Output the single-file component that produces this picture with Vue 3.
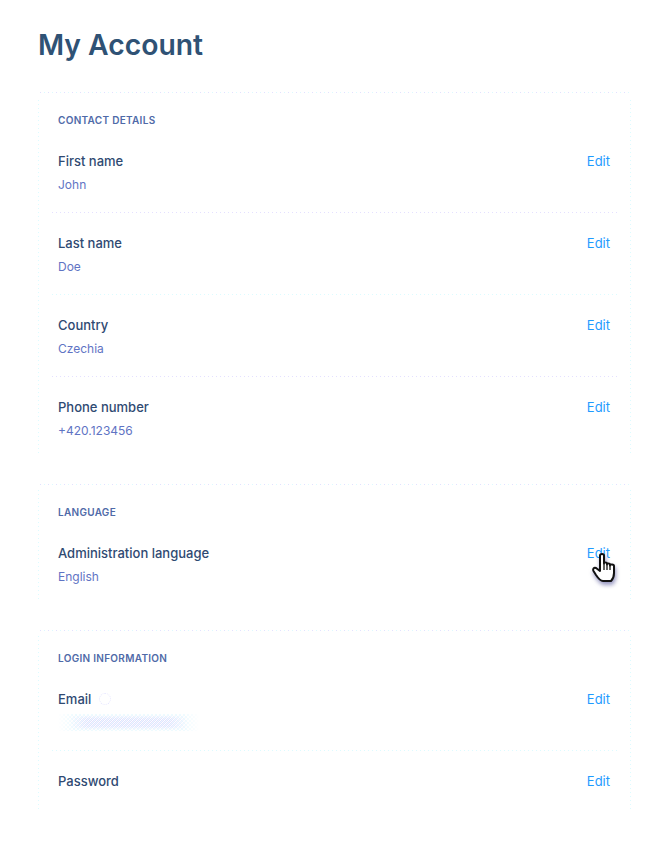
<template>
  <div class="page">
    <h1 class="title">My Account</h1>

    <section v-for="group in groups" :key="group.name" class="card">
      <h2 class="card-title">{{ group.name }}</h2>
      <div v-for="row in group.rows" :key="row.label" class="row" :class="[row.sep, { short: row.short }]">
        <div class="row-text">
          <div class="label-line">
            <span class="label">{{ row.label }}</span>
            <span v-if="row.loading" class="spinner"></span>
          </div>
          <div v-if="row.value" class="value">{{ row.value }}</div>
          <div v-if="row.loading" class="value-blur"></div>
        </div>
        <div class="edit-wrap">
          <a class="edit">Edit</a>
          <svg v-if="row.cursor" class="cursor" width="24" height="30" viewBox="0 0 24 30">
            <path d="M8 2.500C8 .5 12 .5 12 2.500V10.500C12 9 15 9 15 10.500V11.500C15 10 18 10 18 11.500V12.500C18 11 22 11 22 13V20C22 24 21 26 19 28H11C8 28 6 25 4 22L1.500 18C.5 16 2 14 4 15L8 18Z" fill="#fff" stroke="#111" stroke-width="2" stroke-linejoin="round" />
            <path d="M12 11v6M15 12v5M18 12.500v4.500" stroke="#111" stroke-width="1.300" fill="none" />
          </svg>
        </div>
      </div>
    </section>
  </div>
</template>

<script setup>
const groups = [
  {
    name: 'Contact details',
    rows: [
      { label: 'First name', value: 'John', sep: 'sep-lilac' },
      { label: 'Last name', value: 'Doe', sep: 'sep-cyan' },
      { label: 'Country', value: 'Czechia', sep: 'sep-lilac' },
      { label: 'Phone number', value: '+420.123456' }
    ]
  },
  {
    name: 'Language',
    rows: [{ label: 'Administration language', value: 'English', cursor: true }]
  },
  {
    name: 'Login information',
    rows: [
      { label: 'Email', loading: true, sep: 'sep-cyan' },
      { label: 'Password', short: true }
    ]
  }
]
</script>

<style>
html,
body {
  background: #fff;
}
</style>

<style scoped>
.page {
  width: 668px;
  height: 848px;
  overflow: hidden;
  box-sizing: border-box;
  padding: 26px 37px 0 38px;
  font-family: Inter, "Liberation Sans", sans-serif;
}

.title {
  margin: 0 0 28px;
  font-size: 28.300px;
  line-height: 38px;
  font-weight: 600;
  color: #2f5275;
}

/* the dotted outline stops short of the corners, so it is drawn with gradients */
.card {
  padding: 19px 20px 0;
  margin-bottom: 25px;
  background:
    repeating-linear-gradient(90deg, #e2e0ff 0 1px, transparent 1px 4px, #dcfaff 4px 5px, transparent 5px 8px) center top / calc(100% - 4px) 1px no-repeat,
    repeating-linear-gradient(0deg, #dcfbff 0 1px, transparent 1px 4px) left center / 1px calc(100% - 12px) no-repeat,
    repeating-linear-gradient(0deg, #dcfbff 0 1px, transparent 1px 4px) right center / 1px calc(100% - 12px) no-repeat;
}

.card-title {
  margin: 0 0 22px;
  font-size: 10px;
  line-height: 18px;
  font-weight: 600;
  letter-spacing: 0.3px;
  text-transform: uppercase;
  color: #4f6aa8;
}

.row {
  display: flex;
  justify-content: space-between;
  height: 62px;
  margin: 0 -6px 20px;
  padding: 0 7px 0 6px;
}

.row:last-child {
  margin-bottom: 0;
}

.row.short {
  height: 44px;
}

.sep-lilac {
  background: repeating-linear-gradient(90deg, #e4e0ff 0 1px, transparent 1px 4px) left bottom / 100% 1px no-repeat;
}

.sep-cyan {
  background: repeating-linear-gradient(90deg, #dcfbff 0 1px, transparent 1px 4px) left bottom / 100% 1px no-repeat;
}

.label-line {
  display: flex;
  align-items: center;
  gap: 8px;
  height: 20px;
}

.label {
  font-size: 13px;
  font-weight: 500;
  color: #2f4a72;
}

.value {
  margin-top: 5px;
  font-size: 12px;
  line-height: 18px;
  color: #5f74c4;
}

.spinner {
  width: 10px;
  height: 10px;
  border: 1px dotted #e6e6ff;
  border-radius: 50%;
}

.value-blur {
  position: relative;
  width: 143px;
  height: 17px;
  margin: 5px 0 0 -1px;
  background-image: repeating-conic-gradient(#eefbff 0 25%, transparent 0 50%);
  background-size: 4px 4px;
  mask-image: linear-gradient(90deg, transparent, #000 12%, #000 88%, transparent);
}

.value-blur::after {
  content: "";
  position: absolute;
  inset: 1px 12px;
  background-image: repeating-conic-gradient(#e2e2ff 0 25%, transparent 0 50%);
  background-size: 2px 2px;
  mask-image: linear-gradient(90deg, transparent, #000 15%, #000 85%, transparent), linear-gradient(transparent, #000 25%, #000 75%, transparent);
  mask-composite: intersect;
}

.edit-wrap {
  position: relative;
  height: 18px;
  line-height: 18px;
}

.edit {
  font-size: 13px;
  color: #1e9bff;
}

.cursor {
  position: absolute;
  left: 5px;
  top: 10px;
  filter: drop-shadow(1px 3px 2px rgba(80, 80, 150, 0.6));
}
</style>
